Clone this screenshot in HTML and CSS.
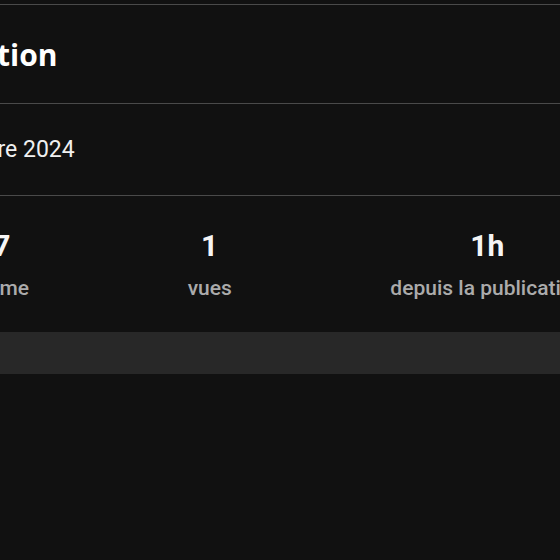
FILE: index.html
```html
<!DOCTYPE html>
<html lang="fr">
<head>
<meta charset="utf-8">
<title>Publication</title>
<link rel="stylesheet" href="styles.css">
</head>
<body>
<div class="panel">
  <header class="head"><h2 class="title">Description</h2></header>
  <div class="date">décembre 2024</div>
  <div class="stats">
    <div class="stat"><span class="num">7</span><span class="label">j'aime</span></div>
    <div class="stat"><span class="num">1</span><span class="label">vues</span></div>
    <div class="stat"><span class="num">1h</span><span class="label">depuis la publication</span></div>
  </div>
  <div class="bar"></div>
</div>
</body>
</html>
```
FILE: styles.css
```css
html, body {
  margin: 0;
  padding: 0;
  background: #111111;
  overflow: hidden;
  height: 100%;
}
body {
  font-family: Roboto, "Liberation Sans", sans-serif;
  color: #f2f2f2;
}
.panel {
  margin-top: 4px;
  margin-left: -184px;
  width: 927px;
}
.head, .date, .stats {
  box-sizing: border-box;
  border-top: 1px solid #4a4a4a;
  display: flex;
  align-items: center;
}
.head {
  height: 99px;
  padding-left: 69px;
}
.title {
  margin: 0;
  font-family: "Open Sans", "DejaVu Sans", sans-serif;
  font-weight: 700;
  font-size: 30px;
  color: #ffffff;
}
.date {
  height: 92px;
  padding-left: 99px;
  font-size: 23px;
  color: #f0f0f0;
}
.stats {
  height: 137px;
  padding: 32px 0 0 0;
  align-items: flex-start;
  justify-content: space-evenly;
}
.stat {
  display: flex;
  flex-direction: column;
  align-items: center;
  gap: 11px;
}
.num {
  font-size: 30px;
  line-height: 36px;
  font-weight: 700;
  color: #f5f5f5;
}
.label {
  font-size: 21px;
  line-height: 26px;
  font-weight: 500;
  color: #ababab;
}
.bar {
  height: 42px;
  background: #282828;
}
```
